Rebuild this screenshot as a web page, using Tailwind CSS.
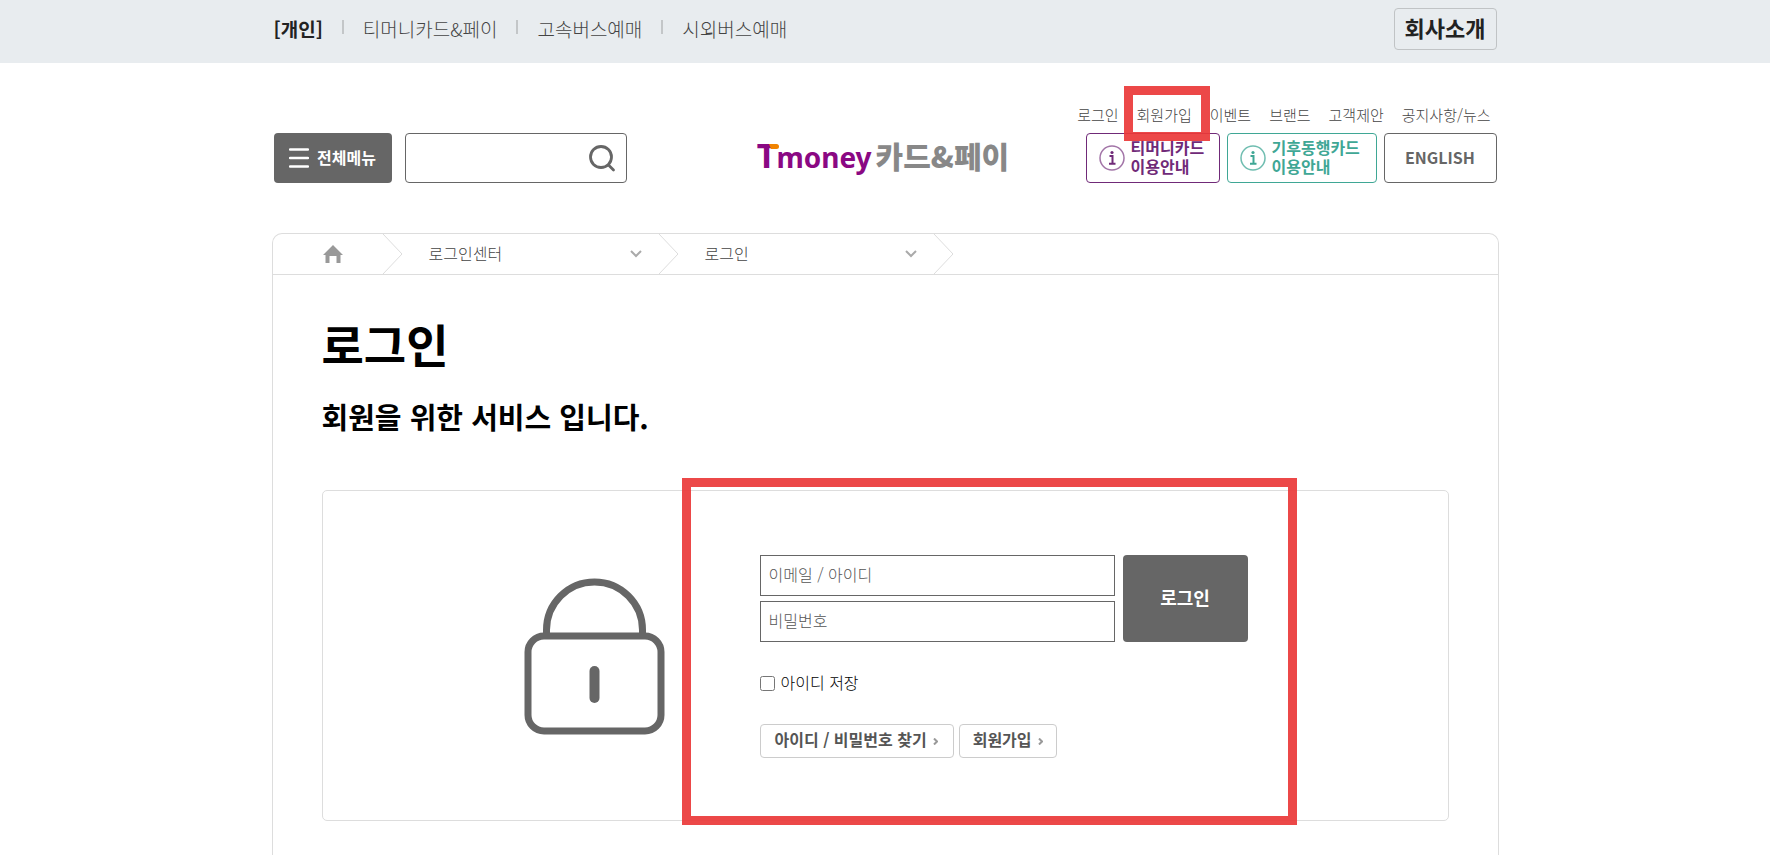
<!doctype html>
<html lang="ko">
<head>
  <meta charset="UTF-8">
  <meta name="viewport" content="width=device-width, initial-scale=1.0">
  <title>로그인 - 티머니 카드&amp;페이</title>
  <script src="https://cdn.jsdelivr.net/npm/@tailwindcss/browser@4"></script>
</head>
<body class="bg-white font-['Noto_Sans_CJK_KR',sans-serif] text-[#666]">
  <div class="min-h-screen flex flex-col overflow-x-clip">

    <!-- Top bar -->
    <div class="bg-[#e8ecef]">
      <div class="mx-auto flex h-[63px] w-full max-w-[1227px] items-start justify-between px-0.5 pt-2">
        <nav class="flex items-center pt-[7px] text-[19px] leading-7 font-light text-[#444]">
          <a href="#" class="font-bold text-[#222]">[개인]</a>
          <span class="mx-[19px] mb-1 h-3.5 w-0.5 bg-[#c3c6c8]"></span>
          <a href="#">티머니카드&amp;페이</a>
          <span class="mx-[19px] mb-1 h-3.5 w-0.5 bg-[#c3c6c8]"></span>
          <a href="#">고속버스예매</a>
          <span class="mx-[19px] mb-1 h-3.5 w-0.5 bg-[#c3c6c8]"></span>
          <a href="#">시외버스예매</a>
        </nav>
        <a href="#" class="h-[42px] rounded border border-[#c0c3c5] px-2.5 text-[22px] leading-9 font-bold text-[#222]">회사소개</a>
      </div>
    </div>

    <!-- Header -->
    <header class="mx-auto grid w-full max-w-[1227px] grid-cols-[1fr_auto_1fr] items-end px-0.5 pt-[42px] pb-[50px]">
      <div class="flex gap-[13px]">
        <button class="flex h-[50px] w-[118px] items-center justify-center gap-2 rounded bg-[#666] text-base font-bold text-white">
          <svg class="h-5 w-5" viewBox="0 0 20 20" fill="none" stroke="#fff" stroke-width="2.400" stroke-linecap="round"><path d="M1 1.500h18M1 10h18M1 18.500h18"/></svg>
          <span class="pb-[3px]">전체메뉴</span>
        </button>
        <form class="flex h-[50px] w-[222px] items-center rounded border border-[#666] pr-2.5">
          <input type="text" aria-label="검색" class="min-w-0 flex-1 px-3 text-base outline-none">
          <button type="button" aria-label="검색">
            <svg class="h-7 w-7" viewBox="0 0 28 28" fill="none" stroke="#666" stroke-width="2.800" stroke-linecap="round"><circle cx="13" cy="13" r="10.500"/><path d="M20.500 21l5 5"/></svg>
          </button>
        </form>
      </div>

      <a href="#" class="flex items-baseline gap-1 pr-1 pb-px leading-[50px] font-bold">
        <span class="relative font-['Noto_Sans',sans-serif] text-[28px] text-[#8a0883]"><span class="text-[34px]">T</span>money<svg class="absolute top-3.5 left-3 h-[5px] w-2.5" viewBox="0 0 10 5"><path d="M0 0h7.500a2.500 2.500 0 0 1 0 5H2z" fill="#f08300"/></svg></span>
        <span class="text-3xl leading-[50px] font-black text-[#888]">카드&amp;페이</span>
      </a>

      <div class="flex flex-col items-end">
        <div class="mb-2 flex gap-[18px] pr-1.5 text-[15px] leading-5 font-light text-[#444]">
          <a href="#">로그인</a>
          <span class="relative">
            <a href="#">회원가입</a>
            <span class="pointer-events-none absolute -top-[19px] -left-[13px] h-[55px] w-[86px] border-9 border-[#ea3838]/92"></span>
          </span>
          <a href="#">이벤트</a>
          <a href="#">브랜드</a>
          <a href="#">고객제안</a>
          <a href="#">공지사항/뉴스</a>
        </div>
        <div class="flex gap-[7px] text-base leading-[19px] font-bold">
          <a href="#" class="flex h-[50px] w-[134px] items-center gap-1.5 rounded border border-[#702a78] pl-3 text-[#702a78]">
            <svg class="h-[26px] w-[26px]" viewBox="0 0 26 26" fill="none" stroke="currentColor"><circle cx="13" cy="13" r="12" stroke-width="1.500" opacity=".65"/><path d="M10.500 11h3v7.500M10 18.800h6.500" stroke-width="2"/><circle cx="13" cy="7.500" r="1.600" fill="currentColor" stroke="none"/></svg>
            <span class="pb-0.5">티머니카드<br>이용안내</span>
          </a>
          <a href="#" class="flex h-[50px] w-[150px] items-center gap-1.5 rounded border border-[#3fa795] pl-3 text-[#3fa795]">
            <svg class="h-[26px] w-[26px]" viewBox="0 0 26 26" fill="none" stroke="currentColor"><circle cx="13" cy="13" r="12" stroke-width="1.500" opacity=".75"/><path d="M10.500 11h3v7.500M10 18.800h6.500" stroke-width="2"/><circle cx="13" cy="7.500" r="1.600" fill="currentColor" stroke="none"/></svg>
            <span class="pb-0.5">기후동행카드<br>이용안내</span>
          </a>
          <a href="#" class="flex h-[50px] w-[113px] items-center justify-center rounded border border-[#666] pb-0.5">ENGLISH</a>
        </div>
      </div>
    </header>

    <!-- Content -->
    <main class="mx-auto w-full max-w-[1227px] flex-1 rounded-t-[10px] border border-b-0 border-[#ddd]">
      <nav class="flex h-[41px] items-center border-b border-[#ddd] text-base font-light text-[#444]">
        <a href="#" aria-label="홈" class="flex w-[110px] justify-end pr-10">
          <svg class="h-[18px] w-5" viewBox="0 0 20 18" fill="#999"><path d="M10 0l10 10h-2.500v8h-4v-7h-7v7h-4v-8H0z"/></svg>
        </a>
        <svg class="h-10 w-5" viewBox="0 0 20 40" fill="none" stroke="#ddd"><path d="M0 0l19 20L0 40"/></svg>
        <button class="flex w-64 items-center justify-between pr-[17px] pl-[26px]"><span class="pb-[3px]">로그인센터</span>
          <svg class="h-3 w-3" viewBox="0 0 12 12" fill="none" stroke="#aaa" stroke-width="2"><path d="M1 3l5 5 5-5"/></svg>
        </button>
        <svg class="h-10 w-5" viewBox="0 0 20 40" fill="none" stroke="#ddd"><path d="M0 0l19 20L0 40"/></svg>
        <button class="flex w-[255px] items-center justify-between pr-[17px] pl-[26px]"><span class="pb-[3px]">로그인</span>
          <svg class="h-3 w-3" viewBox="0 0 12 12" fill="none" stroke="#aaa" stroke-width="2"><path d="M1 3l5 5 5-5"/></svg>
        </button>
        <svg class="h-10 w-5" viewBox="0 0 20 40" fill="none" stroke="#ddd"><path d="M0 0l19 20L0 40"/></svg>
      </nav>

      <div class="px-[49px] pt-9 text-black">
        <h1 class="text-[46px] leading-[64px] font-bold">로그인</h1>
        <p class="mt-[21px] text-[29px] leading-10 font-bold">회원을 위한 서비스 입니다.</p>

        <section class="relative mt-[54px] flex h-[331px] items-start rounded-[5px] border border-[#ddd] pl-[200px]">
          <svg class="mt-[86px] h-40 w-[144px]" viewBox="0 0 144 160" fill="none" stroke="#666" stroke-width="7">
            <path d="M23.500 57v-4a48 48 0 0 1 96 0v4"/>
            <rect x="5" y="59" width="133" height="95" rx="16"/>
            <path d="M71.500 94v27" stroke-width="10" stroke-linecap="round"/>
          </svg>

          <form class="mt-16 ml-[93px] w-[488px]">
            <div class="flex gap-2">
              <div class="flex flex-1 flex-col gap-[5px]">
                <input type="text" aria-label="이메일 / 아이디" placeholder="이메일 / 아이디" class="h-[41px] border border-[#666] px-2 pb-1 text-base font-light placeholder:text-[#555]">
                <input type="password" aria-label="비밀번호" placeholder="비밀번호" class="h-[41px] border border-[#666] px-2 pb-1 text-base font-light placeholder:text-[#555]">
              </div>
              <button type="button" class="w-[125px] rounded bg-[#666] pb-1 text-lg font-bold text-white">로그인</button>
            </div>
            <div class="mt-7 flex items-center gap-1.5">
              <input type="checkbox" id="save-id" class="h-[15px] w-[15px]">
              <label for="save-id" class="pb-0.5 text-base leading-6 font-light text-black">아이디 저장</label>
            </div>
            <div class="mt-7 flex gap-[5px] text-base leading-[28px] font-bold text-[#555]">
              <a href="#" class="flex h-[34px] items-center gap-1.5 rounded border border-[#ccc] pr-[15px] pb-1 pl-3.5">아이디 / 비밀번호 찾기
                <svg class="mt-1 h-[7px] w-[5px]" viewBox="0 0 5 7" fill="none" stroke="#999" stroke-width="2"><path d="M1 .500l3 3-3 3"/></svg>
              </a>
              <a href="#" class="flex h-[34px] items-center gap-1.5 rounded border border-[#ccc] px-[13px] pb-1">회원가입
                <svg class="mt-1 h-[7px] w-[5px]" viewBox="0 0 5 7" fill="none" stroke="#999" stroke-width="2"><path d="M1 .500l3 3-3 3"/></svg>
              </a>
            </div>
          </form>
          <div class="pointer-events-none absolute -top-[13px] left-[359px] h-[347px] w-[615px] border-9 border-[#ea3838]/92"></div>
        </section>
      </div>
    </main>
  </div>
</body>
</html>
